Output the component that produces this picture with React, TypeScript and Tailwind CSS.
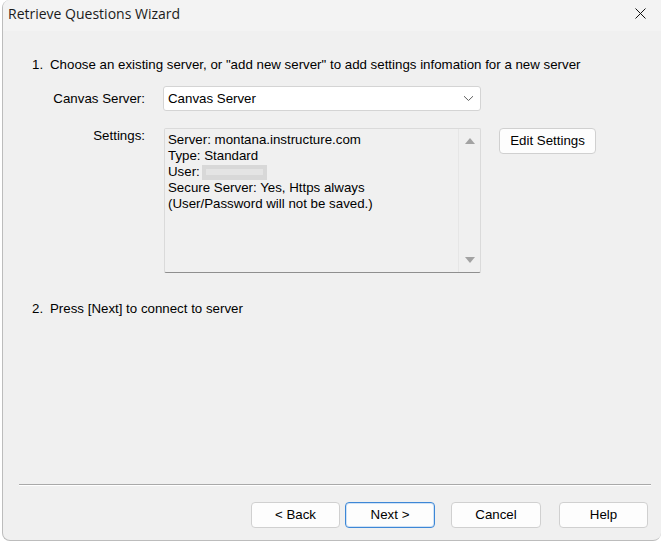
import React from "react";

function Chevron() {
  return (
    <svg width="11" height="7" viewBox="0 0 11 7" className="text-[#5f5f5f]">
      <path d="M1 1.2 L5.5 5.5 L10 1.2" fill="none" stroke="currentColor" strokeWidth="1" />
    </svg>
  );
}

function Btn({ label, primary, w = "w-[90px]" }: { label: string; primary?: boolean; w?: string }) {
  return (
    <button
      className={
        "h-[26px] rounded-[4px] bg-[#fdfdfd] text-[13.3px] text-black flex items-center justify-center border " +
        w +
        " " +
        (primary ? "border-[#3d87d6] shadow-[inset_0_0_0_1px_#cfe2f6]" : "border-[#d0d0d0]")
      }
    >
      {label}
    </button>
  );
}

export default function App() {
  const lines = ["Server: montana.instructure.com", "Type: Standard"];

  return (
    <div className="w-[661px] h-[541px] bg-white font-['Liberation_Sans',Arial,sans-serif] text-black">
      <div className="ml-[2px] h-full flex flex-col bg-[#f0f0f0] border-l border-b border-[#bcbcbc] rounded-tl-[8px] rounded-bl-[8px] rounded-br-[8px] overflow-hidden">
        {/* title bar */}
        <div className="h-[31px] shrink-0 bg-[#f3f3f3] flex items-center justify-between pl-[5px] pr-[15px]">
          <span className="font-['Open_Sans',sans-serif] text-[14px] text-[#1b1b1b] -mt-[4px]">
            Retrieve Questions Wizard
          </span>
          <svg width="11" height="11" viewBox="0 0 11 11" className="-mt-[4px]">
            <path d="M0.5 0.5 L10.5 10.5 M10.5 0.5 L0.5 10.5" stroke="#111" strokeWidth="1" />
          </svg>
        </div>

        {/* body */}
        <div className="flex-1 flex flex-col pl-[29px] pt-[26px] text-[13.3px] leading-[16px]">
          <div className="flex">
            <span className="w-[18px]">1.</span>
            <span>Choose an existing server, or "add new server" to add settings infomation for a new server</span>
          </div>

          <div className="flex items-center mt-[13px]">
            <span className="w-[113px] text-right">Canvas Server:</span>
            <div className="ml-[18px] w-[318px] h-[25px] bg-white border border-[#d4d4d4] rounded-[3px] flex items-center justify-between pl-[4px] pr-[6px]">
              <span>Canvas Server</span>
              <Chevron />
            </div>
          </div>

          <div className="flex items-start mt-[17px]">
            <span className="w-[113px] text-right">Settings:</span>
            <div className="ml-[19px] w-[317px] h-[145px] border border-[#dadada] border-b-[#8f8f8f] rounded-[2px] flex">
              <div className="flex-1 pl-[3px] pt-[3px]">
                {lines.map((l) => (
                  <div key={l}>{l}</div>
                ))}
                <div className="flex items-center">
                  <span>User:</span>
                  <span className="ml-[2px] w-[65px] h-[15px] bg-[#d8d8d8] flex items-center px-[4px]">
                    <span className="block w-full h-[6px] bg-[#e4e4e4]" />
                  </span>
                </div>
                <div>Secure Server: Yes, Https always</div>
                <div>(User/Password will not be saved.)</div>
              </div>
              <div className="w-[22px] border-l border-[#e6e6e6] flex flex-col items-center justify-between pt-[9px] pb-[9px]">
                <svg width="10" height="6" viewBox="0 0 10 6">
                  <path d="M5 0 L10 6 L0 6 Z" fill="#a3a3a3" />
                </svg>
                <svg width="10" height="6" viewBox="0 0 10 6">
                  <path d="M0 0 L10 0 L5 6 Z" fill="#a3a3a3" />
                </svg>
              </div>
            </div>
            <div className="ml-[18px]">
              <Btn label="Edit Settings" w="w-[97px]" />
            </div>
          </div>

          <div className="flex mt-[28px]">
            <span className="w-[18px]">2.</span>
            <span>Press [Next] to connect to server</span>
          </div>

          <div className="flex-1" />

          {/* separator */}
          <div className="-ml-[13px] mr-[10px] border-t border-[#a9a9a9] border-b border-b-white" />

          <div className="flex justify-end pr-[13px] mt-[16px] mb-[12px]">
            <Btn label="< Back" w="w-[89px]" />
            <div className="ml-[5px]">
              <Btn label="Next >" primary />
            </div>
            <div className="ml-[16px]">
              <Btn label="Cancel" />
            </div>
            <div className="ml-[18px]">
              <Btn label="Help" w="w-[89px]" />
            </div>
          </div>
        </div>
      </div>
    </div>
  );
}
